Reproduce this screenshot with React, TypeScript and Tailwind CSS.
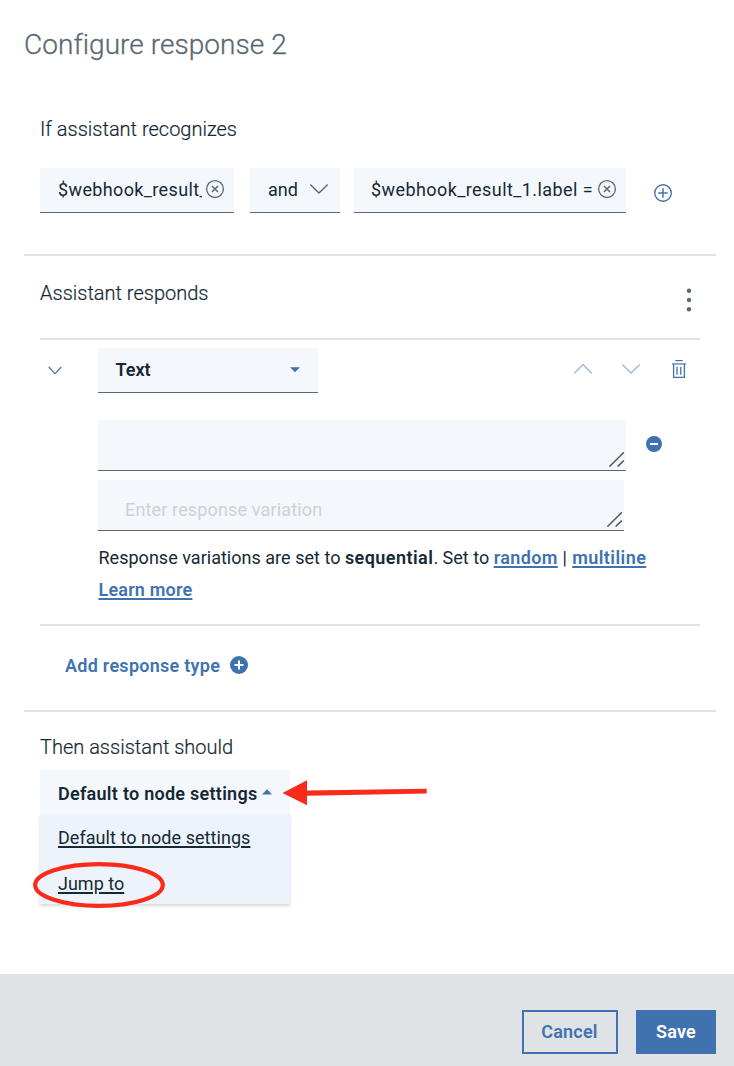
import type { ReactNode } from "react";

type IconProps = { className?: string };

function ClearIcon({ className = "" }: IconProps) {
  return (
    <svg className={className} width="20" height="20" viewBox="0 0 20 20" fill="none" stroke="#5a6872" aria-hidden="true">
      <circle cx="10" cy="10" r="8.4" strokeWidth="1.3" />
      <path d="M7 7l6 6M13 7l-6 6" strokeWidth="1.5" />
    </svg>
  );
}

function ChevronIcon({ up = false, className = "" }: IconProps & { up?: boolean }) {
  return (
    <svg className={className} width="20" height="12" viewBox="0 0 20 12" fill="none" stroke="currentColor" strokeWidth="1.4" aria-hidden="true">
      <path d={up ? "M1.3 10.2L10 1.6l8.7 8.6" : "M1.3 1.4L10 10l8.7-8.6"} />
    </svg>
  );
}

function TrashIcon() {
  return (
    <svg width="14" height="18" viewBox="0 0 14 18" fill="none" stroke="#4172b0" aria-hidden="true">
      <path d="M3.3 0.6h7.4" strokeWidth="1.2" />
      <path d="M0 3.9h14" strokeWidth="1.8" opacity="0.65" />
      <path d="M1.6 4v13.4h10.8V4" strokeWidth="1.3" />
      <path d="M5 6.8v8M8.8 6.8v8" strokeWidth="1.3" />
    </svg>
  );
}

function ResizeHandle() {
  return (
    <svg className="mr-0.5 mb-[3px]" width="15" height="15" viewBox="0 0 15 15" fill="none" stroke="#56595c" strokeWidth="1.5" aria-hidden="true">
      <path d="M0.4 14.6L14.8 0.4M8.6 14.6L14.8 8.6" />
    </svg>
  );
}

function Condition({ children, className }: { children: ReactNode; className: string }) {
  return (
    <div className={`flex h-[45px] items-center border-b border-[#5a6872] bg-[#f4f7fc] ${className}`}>
      {children}
    </div>
  );
}

function SectionTitle({ children, className = "" }: { children: ReactNode; className?: string }) {
  return (
    <h2 className={`h-8 text-xl leading-8 font-light [-webkit-text-stroke:0.2px_#152935] ${className}`}>{children}</h2>
  );
}

function Link({ children, className }: { children: ReactNode; className: string }) {
  return (
    <a className={`font-semibold text-[#4172b0] underline decoration-2 underline-offset-2 [text-decoration-skip-ink:none] ${className}`}>
      {children}
    </a>
  );
}

export default function App() {
  return (
    <main className="flex h-[1066px] w-[734px] flex-col overflow-hidden bg-white font-[Roboto,sans-serif] text-[18px] text-[#152935]">
      <h1 className="mt-[27px] h-9 pl-6 text-[28px] leading-9 font-light tracking-[0.05px] text-[#5a6872] [-webkit-text-stroke:0.3px_#5a6872]">
        Configure response 2
      </h1>

      <section className="mt-[50px] mr-[18px] ml-6 h-[143px] border-b-2 border-[#dfe3e6] px-4">
        <SectionTitle>If assistant recognizes</SectionTitle>
        <div className="mt-[23px] flex">
          <Condition className="w-[194px] pl-[18px]">
            <span className="mb-px w-[144px] overflow-hidden tracking-[0.37px] whitespace-nowrap">$webhook_result_1</span>
            <ClearIcon className="mb-[3px] ml-[3px]" />
          </Condition>
          <Condition className="ml-4 w-[90px] pl-[18px]">
            <span className="mb-px w-[41px]">and</span>
            <ChevronIcon className="mb-[2px] text-[#5a6872]" />
          </Condition>
          <Condition className="ml-[14px] w-[272px] pl-[17px]">
            <span className="mb-px w-[226px] overflow-hidden tracking-[0.42px] whitespace-nowrap">$webhook_result_1.label =</span>
            <ClearIcon className="mb-[3px]" />
          </Condition>
          <svg className="mt-[15px] ml-[27px]" width="20" height="20" viewBox="0 0 20 20" fill="none" stroke="#4172b0" aria-hidden="true">
            <circle cx="10" cy="10" r="8.3" strokeWidth="1.4" />
            <path d="M10 5.3v9.4M5.3 10h9.4" strokeWidth="1.5" />
          </svg>
        </div>
      </section>

      <section className="mr-[18px] ml-6 h-[456px] border-b-2 border-[#dfe3e6] px-4">
        <div className="flex h-[84px] items-start justify-between border-b-2 border-[#dfe3e6]">
          <SectionTitle className="mt-[21px]">Assistant responds</SectionTitle>
          <svg className="mt-8 mr-[7px]" width="8" height="24" viewBox="0 0 8 24" fill="#5a6872" aria-hidden="true">
            <circle cx="4" cy="2.8" r="2.2" />
            <circle cx="4" cy="12" r="2.2" />
            <circle cx="4" cy="21.2" r="2.2" />
          </svg>
        </div>

        <div className="h-[286px] border-b-2 border-[#dfe3e6] pt-2">
          <div className="flex">
            <svg className="mt-[18px] ml-2" width="14" height="9" viewBox="0 0 14 9" fill="none" stroke="#4172b0" strokeWidth="1.2" aria-hidden="true">
              <path d="M0.7 1l6.3 6.6L13.3 1" />
            </svg>
            <button className="ml-9 flex h-[45px] w-[220px] items-center justify-between border-b border-[#5a6872] bg-[#f4f7fc] pr-[18px] pl-[17.5px]">
              <span className="mb-px font-semibold">Text</span>
              <svg className="mb-px" width="10" height="6" viewBox="0 0 10 6" fill="#4172b0" aria-hidden="true">
                <path d="M0 0.3h10L5 5.3z" />
              </svg>
            </button>
            <ChevronIcon up className="mt-[15px] ml-[255px] text-[#a0b8d7]" />
            <ChevronIcon className="mt-[15px] ml-7 text-[#a0b8d7]" />
            <div className="mt-3 ml-[31px]">
              <TrashIcon />
            </div>
          </div>

          <div className="mt-[27px] ml-[58px] flex">
            <div className="flex h-[51px] w-[528px] items-end justify-end border-b border-[#5a6872] bg-[#f4f7fc]">
              <ResizeHandle />
            </div>
            <svg className="mt-4 ml-5" width="16" height="16" viewBox="0 0 16 16" aria-hidden="true">
              <circle cx="8" cy="8" r="8" fill="#4172b0" />
              <path d="M4 7h8v2H4z" fill="#fff" />
            </svg>
          </div>
          <div className="mt-[9px] ml-[58px] flex h-[51px] w-[526px] items-end justify-between border-b border-[#5a6872] bg-[#f4f7fc] pl-[27px]">
            <span className="h-9 leading-8 tracking-[0.15px] text-[#cdd1d4]">Enter response variation</span>
            <ResizeHandle />
          </div>

          <p className="mt-[11px] ml-[58.5px] leading-8 whitespace-nowrap">
            <span className="tracking-[0.02px]">Response variations are set to </span>
            <strong className="font-semibold tracking-[0.45px]">sequential</strong>
            <span>. Set to </span>
            <Link className="tracking-[0.38px]">random</Link>
            <span className="tracking-[0.35px]"> | </span>
            <Link className="tracking-[0.44px]">multiline</Link>
            <br />
            <Link className="tracking-[0.2px]">Learn more</Link>
          </p>
        </div>

        <button className="mt-[23px] ml-[25px] flex h-8 items-center font-semibold text-[#4172b0]">
          <span className="w-[165px] text-left tracking-[0.27px]">Add response type</span>
          <svg width="18" height="18" viewBox="0 0 18 18" aria-hidden="true">
            <circle cx="9" cy="9" r="9" fill="#4172b0" />
            <path d="M9 4.5v9M4.5 9h9" stroke="#fff" strokeWidth="2" />
          </svg>
        </button>
      </section>

      <section className="relative flex flex-1 flex-col px-10 pt-[19px]">
        <SectionTitle>Then assistant should</SectionTitle>
        <button className="mt-[7px] flex h-11 w-[250px] items-center bg-[#f4f7fc] pt-[2px] pl-[18px] font-semibold">
          <span className="w-[204px] text-left tracking-[0.27px] whitespace-nowrap">Default to node settings</span>
          <svg className="mb-[3px]" width="10" height="6" viewBox="0 0 10 6" fill="#4172b0" aria-hidden="true">
            <path d="M0 5.5h10L5 0.3z" />
          </svg>
        </button>
        <ul className="h-[90px] w-[250px] bg-[#edf3fb] pt-2 pl-[18px] shadow-[0_2px_3px_rgba(0,0,0,0.16)]">
          <li className="h-[46px] leading-8">
            <a className="tracking-[0.05px] underline decoration-2 underline-offset-2">Default to node settings</a>
          </li>
          <li className="leading-8">
            <a className="underline decoration-2 underline-offset-2">Jump to</a>
          </li>
        </ul>
        <svg className="absolute top-[66px] left-[282px]" width="146" height="28" viewBox="0 0 146 28" fill="#fb2b1c" aria-hidden="true">
          <path d="M0.5 15L25 2.3V12.5L144.7 10.7V15.6L25 17.7V27.2z" />
        </svg>
        <svg className="absolute top-[148px] left-8" width="136" height="50" viewBox="0 0 136 50" fill="none" stroke="#fb2b1c" strokeWidth="4.2" aria-hidden="true">
          <ellipse cx="67" cy="25" rx="63.8" ry="20.9" />
        </svg>
      </section>

      <footer className="flex h-[92px] items-start justify-end gap-[18px] bg-[#dfe3e6] pt-9 pr-[18px] font-semibold">
        <button className="h-11 w-24 border-2 border-[#4172b0] pr-px pb-[2px] tracking-[0.2px] text-[#4172b0]">Cancel</button>
        <button className="h-11 w-20 bg-[#4172b0] pb-[2px] tracking-[0.2px] text-white">Save</button>
      </footer>
    </main>
  );
}
